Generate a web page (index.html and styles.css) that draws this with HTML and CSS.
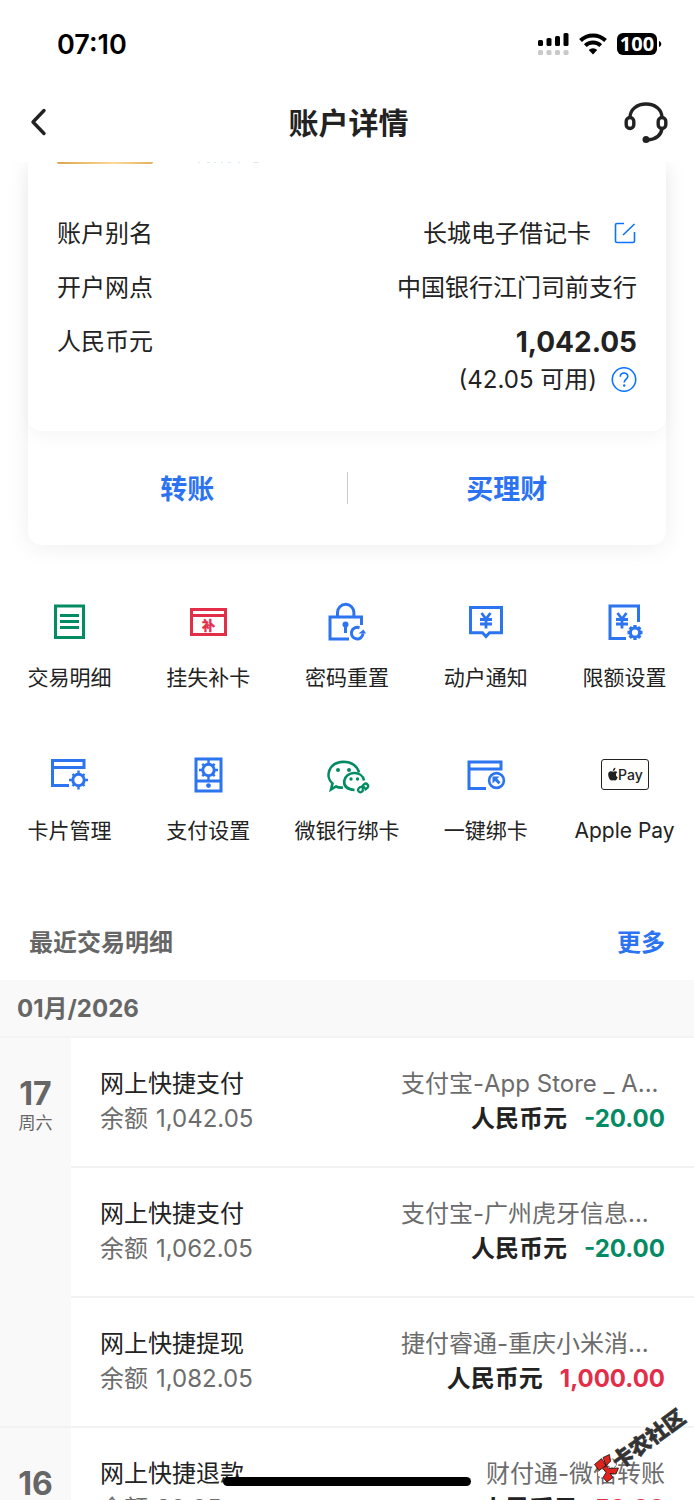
FILE: index.html
```html
<!DOCTYPE html>
<html lang="zh-CN">
<head>
<meta charset="utf-8">
<meta name="viewport" content="width=device-width, initial-scale=1">
<title>账户详情</title>
<link rel="stylesheet" href="styles.css">
</head>
<body>
<div class="app">
  <div class="status">
    <span class="status-time">07:10</span>
    <div class="status-icons">
      <svg width="31" height="24" viewBox="0 0 31 24" aria-hidden="true">
        <g fill="#000"><rect x="0" y="8" width="5" height="6" rx="1.5"/><rect x="8.5" y="6" width="5" height="8" rx="1.5"/><rect x="17" y="4" width="5" height="10" rx="1.5"/><rect x="25.500" y="1" width="5" height="13" rx="1.5"/></g>
        <g fill="#c9c9c9"><rect x="0" y="18" width="5" height="5" rx="1.5"/><rect x="8.500" y="18" width="5" height="5" rx="1.5"/><rect x="17" y="18" width="5" height="5" rx="1.5"/><rect x="25.500" y="18" width="5" height="5" rx="1.5"/></g>
      </svg>
      <svg width="28" height="24" viewBox="0 0 28 24" aria-hidden="true">
        <path d="M1.500 8.500a18 18 0 0 1 25 0M6.300 13.600a11.300 11.300 0 0 1 15.400 0" fill="none" stroke="#000" stroke-width="4"/>
        <path d="M14 22.500l-4.300-4.400a6.200 6.200 0 0 1 8.600 0z"/>
      </svg>
      <svg width="45" height="24" viewBox="0 0 45 24" aria-hidden="true">
        <rect x="0" y="1" width="40" height="22" rx="6"/>
        <path d="M42 9c3 1 3 5 0 6z"/>
        <text class="battery-text" x="20" y="19" text-anchor="middle">100</text>
      </svg>
    </div>
  </div>

  <header class="nav">
    <button class="nav-btn" type="button" aria-label="返回">
      <svg width="18" height="30" viewBox="0 0 18 30"><path d="M15 2.500L4 14l11 11.500" fill="none" stroke="#222" stroke-width="3.400" stroke-linecap="round" stroke-linejoin="round"/></svg>
    </button>
    <h1 class="nav-title">账户详情</h1>
    <button class="nav-btn nav-btn-end" type="button" aria-label="客服">
      <svg width="44" height="44" viewBox="0 0 44 44" fill="none" stroke="#222" stroke-width="3.400">
        <path d="M6 16.500C6 8.500 13 3 22 3S38 8.500 38 16.500M38 27.500c-1 7-6 11-15 11.500"/>
        <rect x="2.200" y="16.500" width="7.600" height="11" rx="3.800"/><rect x="34.200" y="16.500" width="7.600" height="11" rx="3.800"/>
        <circle cx="22" cy="38.500" r="3.500" fill="#222" stroke="none"/>
      </svg>
    </button>
  </header>

  <main class="content">
    <section class="card">
      <div class="card-main">
        <div class="thumb">
          <span class="thumb-img"></span>
          <svg width="64" height="2" viewBox="0 0 64 2" aria-hidden="true"><path d="M1 .5h2M10 .5h3M17 .5h2M24 .5h2M31 .5h3M41 .5h2M56 .5h6" stroke="#dcebfa"/></svg>
        </div>
        <dl class="facts">
          <div class="fact"><dt>账户别名</dt><dd>长城电子借记卡
            <button class="icon-btn" type="button" aria-label="编辑别名"><svg width="24" height="24" viewBox="0 0 24 24" fill="none" stroke="#0a74ff" stroke-width="1.600"><path d="M11 1.500H4Q2.500 1.500 2.500 3v16Q2.500 20.500 4 20.500h16q1.500 0 1.500-1.500v-9M10 13L21.500 2"/></svg></button></dd></div>
          <div class="fact"><dt>开户网点</dt><dd>中国银行江门司前支行</dd></div>
          <div class="fact"><dt>人民币元</dt><dd class="balance">1,042.05</dd></div>
        </dl>
        <p class="available">(42.05 可用)
          <button class="icon-btn" type="button" aria-label="可用余额说明"><svg width="26" height="26" viewBox="0 0 26 26" fill="none" stroke="#0a74ff" stroke-width="1.600"><circle cx="13" cy="12.500" r="11.700"/><path d="M9.300 9.700c0-5 7.500-4.800 7.500-.4 0 2.900-3.600 2.800-3.600 6.200"/><circle cx="13.200" cy="18.500" r="1.200" fill="#0a74ff" stroke="none"/></svg></button></p>
      </div>
      <div class="card-actions">
        <button class="card-action" type="button">转账</button>
        <button class="card-action" type="button">买理财</button>
      </div>
    </section>

    <nav class="grid">
      <button class="tool" type="button">
        <svg class="tool-icon green" viewBox="0 0 48 48"><path d="M10.500 8h28v31.500h-28zM15 17.500h19M15 23.500h19M15 29.500h19"/></svg>交易明细</button>
      <button class="tool" type="button">
        <svg class="tool-icon red" viewBox="0 0 48 48"><path d="M7.500 11.500h34v25h-34zM7.500 17.500h34"/><text class="icon-char" x="24.500" y="32" text-anchor="middle">补</text></svg>挂失补卡</button>
      <button class="tool" type="button">
        <svg class="tool-icon blue" viewBox="0 0 48 48"><path d="M26 41H7V19h31.500v8M14.500 19v-4.500a8.200 8.200 0 0 1 16.400 0V19M22.500 27v8"/><circle class="solid" cx="22.500" cy="26.500" r="3"/><path d="M36.500 29.800a5.800 5.800 0 1 0 3.500 5.700"/><path class="solid" d="M35.500 35.500h7.500l-2.500-4z"/></svg>密码重置</button>
      <button class="tool" type="button">
        <svg class="tool-icon blue" viewBox="0 0 48 48"><path d="M8.500 9.500h31v25.300h-12L24 38.500l-3.500-3.700h-12z"/><path d="M19.500 15l4.500 6 4.500-6M24 21v9.500M18 21.500h12M18 26h12" stroke-width="2.800"/></svg>动户通知</button>
      <button class="tool" type="button">
        <svg class="tool-icon blue" viewBox="0 0 48 48"><path d="M25 40.500H9V8h28.500v16"/><path d="M16.500 15l4.500 6 4.500-6M21 21v9.500M15 21.500h12M15 26h12" stroke-width="2.800"/><circle cx="34" cy="34.500" r="4.600"/><path d="M34 27v3M34 39v3M26.500 34.500h3M38.500 34.500h3M28.700 29.200l2.100 2.100M37.200 37.700l2.100 2.100M28.700 39.800l2.100-2.100M37.200 31.300l2.100-2.100" stroke-width="3.400"/></svg>限额设置</button>
      <button class="tool" type="button">
        <svg class="tool-icon blue" viewBox="0 0 48 48"><path d="M7.500 16.500v-7H39v7H7.500v18H24"/><circle cx="33.500" cy="29" r="5.700"/><path d="M33.500 19.500v4M33.500 34.500v4M24 29h4M39 29h4M27.500 23l2 2M37.500 33l2 2M27.500 35l2-2M37.500 25l2-2" stroke-width="2.400"/></svg>卡片管理</button>
      <button class="tool" type="button">
        <svg class="tool-icon blue" viewBox="0 0 48 48"><path d="M12 8h25v32H12zM12 30h25"/><circle cx="24.500" cy="19" r="5.700"/><path d="M24.500 9v4M24.500 25v4M15 19h4M30 19h4M18.300 12.800l2 2M28.700 23.200l2 2M18.300 25.200l2-2M28.700 14.800l2-2" stroke-width="2.400"/><circle class="solid" cx="24.500" cy="34.600" r="2.400"/></svg>支付设置</button>
      <button class="tool" type="button">
        <svg class="tool-icon green" viewBox="0 0 48 48"><path d="M20 36.500q-4 .5-7-1L8 38.500l1.500-6C2 26 5 11.500 20.500 10.800c8 0 14 4.200 15.500 10.700" stroke-width="2.600"/><path d="M31.500 39q-11-1-10.300-9C22.500 20 39 19 41 29.500" stroke-width="2.600"/><circle class="solid" cx="15" cy="19" r="2"/><circle class="solid" cx="26" cy="19" r="2"/><circle class="solid" cx="28" cy="28" r="1.700"/><circle class="solid" cx="34.500" cy="28" r="1.700"/><path d="M38 36.500l3-3.200q2-1.600 3.500.2t-.2 3.500l-2.500 2M42 35.500l-3 3.200M40.500 38.500q-2 4-4.300 2.300t0-4l1.500-1" stroke-width="2.300"/></svg>微银行绑卡</button>
      <button class="tool" type="button">
        <svg class="tool-icon blue" viewBox="0 0 48 48"><path d="M7 18v-7h32v7H7v19.500h17"/><circle cx="34.500" cy="29.500" r="7.400" stroke-width="2.600"/><path class="solid" d="M30.500 25.500h7l-2.300 2.300 3.300 3.400-2 2-3.400-3.300-2.600 2.500z"/></svg>一键绑卡</button>
      <button class="tool" type="button">
        <svg class="tool-icon apple" viewBox="0 0 48 48"><rect x=".5" y="8.500" width="47" height="30" rx="2.500"/><g class="ink" transform="translate(-2.500 -3.500) scale(1.200)"><path d="M12.800 20.200c1.100-.7 2.300-.3 2.900.4-1.700 1.100-1.400 3.500.4 4.200-.7 1.800-1.700 3-2.600 2.700-.9-.4-1.200-.4-2.100 0-2.200.8-4.400-5-2.700-7 1-1.200 2.300-.8 3.200-.4zM11.900 19.500c0-1.600 1-2.600 2.200-2.700.1 1.500-.9 2.600-2.200 2.700z"/></g><text class="pay-text" x="17" y="29">Pay</text></svg>Apple Pay</button>
    </nav>

    <section class="history">
      <div class="history-head">
        <h2 class="history-title">最近交易明细</h2>
        <a class="more" href="#">更多</a>
      </div>
      <h3 class="month">01月/2026</h3>
      <div class="day">
        <div class="date"><span class="date-num">17</span><span class="date-week">周六</span></div>
        <ul class="records">
          <li class="record"><div class="what"><p>网上快捷支付</p><p class="rest"><span>余额</span><span>1,042.05</span></p></div>
            <div class="amounts"><p class="party clipped">支付宝-App Store _ A...</p><p class="sum">人民币元<b class="out">-20.00</b></p></div></li>
          <li class="record"><div class="what"><p>网上快捷支付</p><p class="rest"><span>余额</span><span>1,062.05</span></p></div>
            <div class="amounts"><p class="party clipped">支付宝-广州虎牙信息...</p><p class="sum">人民币元<b class="out">-20.00</b></p></div></li>
          <li class="record"><div class="what"><p>网上快捷提现</p><p class="rest"><span>余额</span><span>1,082.05</span></p></div>
            <div class="amounts"><p class="party clipped">捷付睿通-重庆小米消...</p><p class="sum">人民币元<b class="in">1,000.00</b></p></div></li>
        </ul>
      </div>
      <div class="day">
        <div class="date"><span class="date-num">16</span></div>
        <ul class="records">
          <li class="record"><div class="what"><p>网上快捷退款</p><p class="rest"><span>余额</span><span>82.05</span></p></div>
            <div class="amounts"><p class="party">财付通-微信转账</p><p class="sum">人民币元<b class="in">50.00</b></p></div></li>
        </ul>
      </div>
    </section>
  </main>

  <svg class="stamp" width="104" height="100" viewBox="0 0 104 100" aria-label="卡农社区">
    <g transform="translate(16 67.500)"><circle cx="6" cy="-4" r="4.500" fill="#fff" stroke="#555" stroke-dasharray="2 1"/><circle cx="-4" cy="6" r="4.500" fill="#fff" stroke="#555" stroke-dasharray="2 1"/>
      <path d="M-11.500-3l7-6L0-2l-7 5zM-3-10l6.500-3 1 7L0-2zM0-2l3 3 9.500-.5-2.500 6L4 6l3 4-6 4.500-4-4.500L0 5l-3-4z" fill="#e0231c" stroke="#111" stroke-width=".8"/></g>
    <text class="stamp-text" transform="translate(29 70) rotate(-36)">卡农社区</text>
  </svg>
  <div class="home-bar"></div>
</div>
</body>
</html>
```
FILE: styles.css
```css
* { box-sizing: border-box; }

body {
  margin: 0;
  background: #fff;
  color: #222;
  font-family: Inter, "Noto Sans CJK SC", sans-serif;
  font-size: 24px;
}

h1, h2, h3, p, dl, dd, ul { margin: 0; padding: 0; }
ul { list-style: none; }

button {
  border: 0;
  padding: 0;
  background: none;
  color: inherit;
  font: inherit;
}

svg { display: block; flex: none; }

.app {
  position: relative;
  display: flex;
  flex-direction: column;
  height: 100vh;
  overflow: hidden;
}

.status {
  flex: none;
  display: flex;
  align-items: center;
  justify-content: space-between;
  height: 84px;
  padding: 4px 32px 0 57px;
  color: #000;
}

.status-time { font-size: 27px; font-weight: 600; }
.status-icons { display: flex; gap: 10px; }
.battery-text { font-family: "Open Sans", sans-serif; font-size: 20px; font-weight: 700; fill: #fff; }

.nav {
  flex: none;
  display: grid;
  grid-template-columns: 80px 1fr 80px;
  align-items: center;
  height: 78px;
  padding: 0 26px 0 29px;
}

.nav-btn { justify-self: start; }
.nav-btn-end { justify-self: end; }
.nav-title { text-align: center; font-size: 30px; line-height: 44px; font-weight: 700; }

.content { flex: 1; min-height: 0; overflow: hidden; }

.card {
  margin: 0 28px;
  border-radius: 0 0 14px 14px;
  background: #fff;
  box-shadow: 0 2px 24px rgba(0, 0, 0, 0.07);
}

.card-main {
  padding: 0 29px 34px;
  border-radius: 0 0 14px 14px;
  box-shadow: 0 6px 18px rgba(0, 0, 0, 0.04);
}

.thumb { display: flex; gap: 44px; height: 55px; }

.thumb-img {
  width: 96px;
  height: 2px;
  border-radius: 0 0 4px 4px;
  background: linear-gradient(90deg, #dca54c, #fbd998 60%, #e3b15c);
}

.facts { display: flex; flex-direction: column; gap: 20px; }
.fact { display: flex; justify-content: space-between; line-height: 34px; }
.fact dd { display: flex; align-items: center; gap: 22px; }
.fact .balance { font-size: 28px; font-weight: 700; }

.available {
  display: flex;
  align-items: center;
  justify-content: flex-end;
  gap: 14px;
  margin-top: 4px;
  line-height: 34px;
}

.card-actions { display: flex; padding: 41px 0; }

.card-action {
  flex: 1;
  padding-top: 3px;
  font-size: 27px;
  font-weight: 700;
  line-height: 29px;
  color: #2b73f0;
}

.card-action + .card-action { border-left: 1px solid #ccc; }

.grid {
  display: grid;
  grid-template-columns: repeat(5, 1fr);
  row-gap: 58px;
  margin: 53px 0 58px;
}

.tool {
  display: flex;
  flex-direction: column;
  align-items: center;
  gap: 17px;
  font-size: 21px;
  line-height: 30px;
  white-space: nowrap;
}

.tool-icon { width: 48px; height: 48px; fill: none; stroke: currentColor; stroke-width: 3; }
.tool-icon .solid { fill: currentColor; stroke: none; }
.green { color: #038b63; }
.red { color: #e22e49; }
.blue { color: #2d74f0; }
.icon-char { font-size: 13px; font-weight: 700; fill: currentColor; stroke: currentColor; stroke-width: 0.5; }
.apple { color: #222; stroke-width: 1; }
.apple rect { fill: #fefefc; }
.apple .ink { fill: #222; stroke: none; }
.pay-text { font-size: 14px; font-weight: 500; fill: #222; stroke: none; }

.history-head {
  display: flex;
  align-items: center;
  justify-content: space-between;
  height: 76px;
  padding: 0 29px 4px;
}

.history-title { font-size: 24px; font-weight: 700; color: #666; }
.more { font-weight: 700; color: #2b73f0; text-decoration: none; }

.month {
  padding: 12px 17px 10px;
  border-bottom: 2px solid #f4f4f4;
  background: #f9f9f9;
  font-size: 24px;
  font-weight: 700;
  line-height: 34px;
  color: #666;
}

.day { display: flex; border-bottom: 2px solid #f2f2f2; }

.date {
  flex: none;
  display: flex;
  flex-direction: column;
  align-items: center;
  width: 71px;
  padding-top: 38px;
  background: #f9f9f9;
  color: #666;
}

.date-num { font-size: 32px; font-weight: 700; line-height: 36px; }
.date-week { font-size: 17px; line-height: 22px; }
.records { flex: 1; min-width: 0; }

.record {
  display: flex;
  justify-content: space-between;
  padding: 28px 29px 30px;
  line-height: 35px;
  white-space: nowrap;
}

.record + .record { border-top: 2px solid #f2f2f2; }
.rest, .party { color: #6c6c6c; }
.rest { display: flex; gap: 8px; }
.amounts { text-align: right; }
.clipped { width: 264px; text-align: left; }
.sum { font-weight: 700; }
.sum b { margin-left: 17px; font-weight: 700; }
.out { color: #038b63; }
.in { color: #e22e49; }

.stamp { position: absolute; right: 0; bottom: 0; }
.stamp-text { font-size: 21px; font-weight: 900; fill: #333; stroke: #333; stroke-width: 0.6; }

.home-bar {
  position: absolute;
  bottom: 14px;
  left: 50%;
  width: 248px;
  height: 9px;
  margin-left: -124px;
  border-radius: 5px;
  background: #000;
}
```
